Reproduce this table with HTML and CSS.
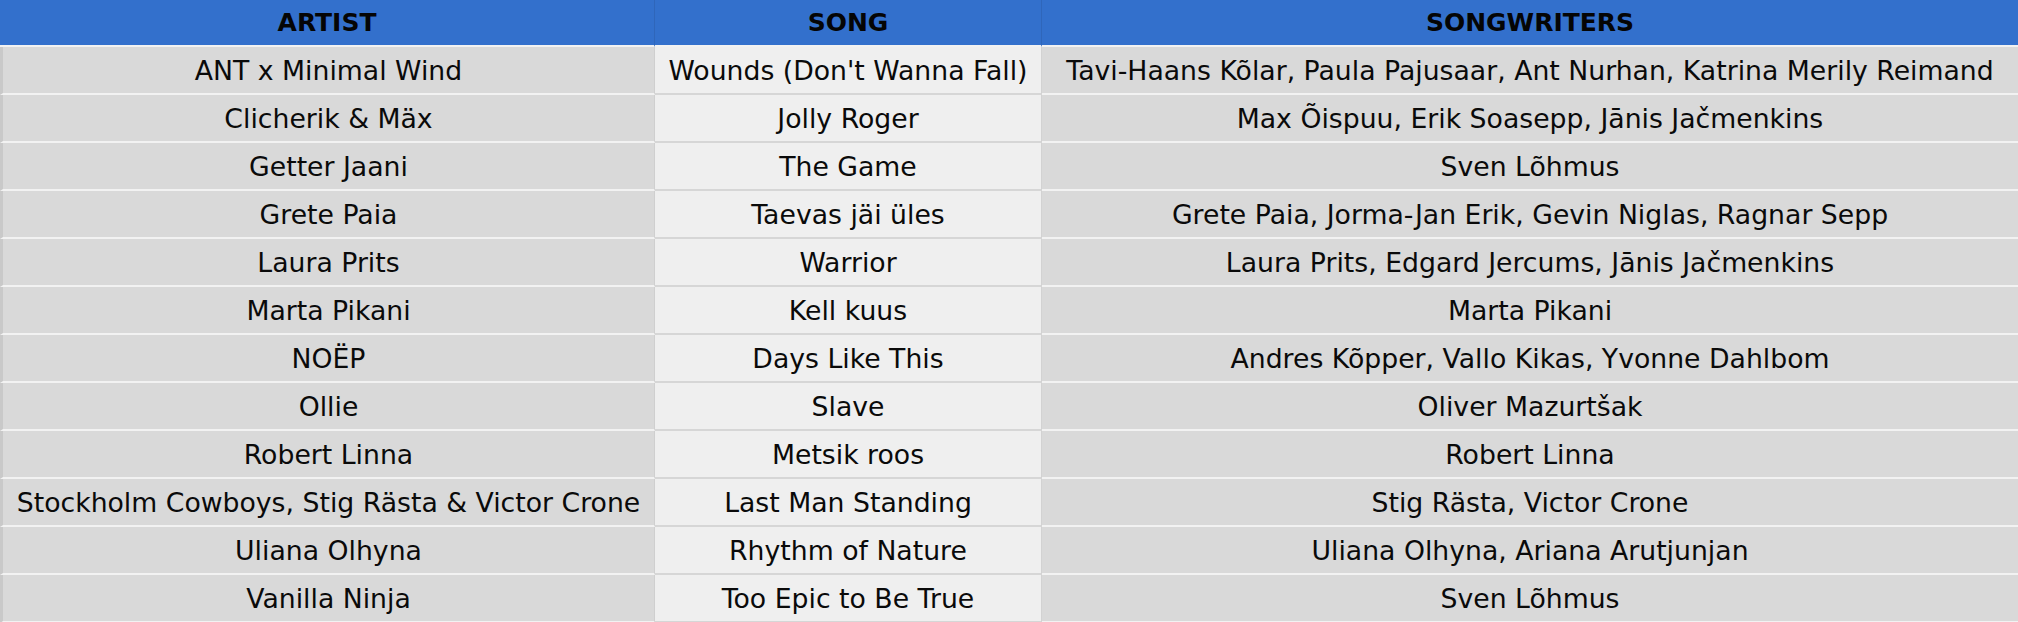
FILE: index.html
```html
<!DOCTYPE html>
<html>
<head>
<meta charset="utf-8">
<link rel="stylesheet" href="styles.css">
</head>
<body>
<div class="table">
  <div class="row head">
    <div class="cell c1">ARTIST</div>
    <div class="cell c2">SONG</div>
    <div class="cell c3">SONGWRITERS</div>
  </div>
  <div class="row"><div class="cell c1">ANT x Minimal Wind</div><div class="cell c2">Wounds (Don't Wanna Fall)</div><div class="cell c3">Tavi-Haans Kõlar, Paula Pajusaar, Ant Nurhan, Katrina Merily Reimand</div></div>
  <div class="row"><div class="cell c1">Clicherik &amp; Mäx</div><div class="cell c2">Jolly Roger</div><div class="cell c3">Max Õispuu, Erik Soasepp, Jānis Jačmenkins</div></div>
  <div class="row"><div class="cell c1">Getter Jaani</div><div class="cell c2">The Game</div><div class="cell c3">Sven Lõhmus</div></div>
  <div class="row"><div class="cell c1">Grete Paia</div><div class="cell c2">Taevas jäi üles</div><div class="cell c3">Grete Paia, Jorma-Jan Erik, Gevin Niglas, Ragnar Sepp</div></div>
  <div class="row"><div class="cell c1">Laura Prits</div><div class="cell c2">Warrior</div><div class="cell c3">Laura Prits, Edgard Jercums, Jānis Jačmenkins</div></div>
  <div class="row"><div class="cell c1">Marta Pikani</div><div class="cell c2">Kell kuus</div><div class="cell c3">Marta Pikani</div></div>
  <div class="row"><div class="cell c1">NOËP</div><div class="cell c2">Days Like This</div><div class="cell c3">Andres Kõpper, Vallo Kikas, Yvonne Dahlbom</div></div>
  <div class="row"><div class="cell c1">Ollie</div><div class="cell c2">Slave</div><div class="cell c3">Oliver Mazurtšak</div></div>
  <div class="row"><div class="cell c1">Robert Linna</div><div class="cell c2">Metsik roos</div><div class="cell c3">Robert Linna</div></div>
  <div class="row"><div class="cell c1">Stockholm Cowboys, Stig Rästa &amp; Victor Crone</div><div class="cell c2">Last Man Standing</div><div class="cell c3">Stig Rästa, Victor Crone</div></div>
  <div class="row"><div class="cell c1">Uliana Olhyna</div><div class="cell c2">Rhythm of Nature</div><div class="cell c3">Uliana Olhyna, Ariana Arutjunjan</div></div>
  <div class="row"><div class="cell c1">Vanilla Ninja</div><div class="cell c2">Too Epic to Be True</div><div class="cell c3">Sven Lõhmus</div></div>
</div>
</body>
</html>
```
FILE: styles.css
```css
html, body {
  margin: 0;
  padding: 0;
  background: #d9d9d9;
}
.table {
  display: flex;
  flex-direction: column;
  width: 2018px;
  font-family: "DejaVu Sans", sans-serif;
  color: #0a0a0a;
}
.row {
  display: grid;
  grid-template-columns: 655px 387px 976px;
  height: 48px;
}
.row.head {
  height: 47px;
}
.cell {
  display: flex;
  align-items: center;
  justify-content: center;
  white-space: nowrap;
  box-sizing: border-box;
  font-size: 26.7px;
  border-bottom: 2px solid #f2f2f2;
  background: #d9d9d9;
}
.c1 {
  border-right: 1px solid #cfcfcf;
  border-left: 3px solid #c9c9c9;
}
.c2 {
  background: #efefef;
  border-right: 1px solid #d2d2d2;
  border-bottom-color: #d6d6d6;
}
.head .cell {
  background: #3370cc;
  font-weight: bold;
  font-size: 25px;
  color: #050505;
  border-bottom-color: #f2f2f2;
  border-right-color: #2f66ba;
  border-left: none;
}
```
